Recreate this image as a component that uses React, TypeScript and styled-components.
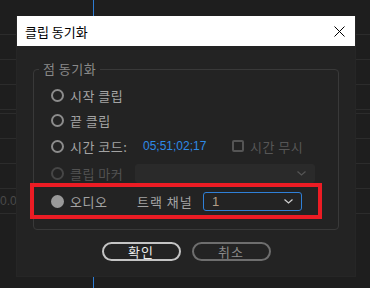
import styled, { createGlobalStyle } from "styled-components";

const GlobalStyle = createGlobalStyle`
    body {
        margin: 0;
        background: #1e1e1e;
    }
    * {
        box-sizing: border-box;
    }
`;

const Page = styled.div`
    position: relative;
    width: 370px;
    height: 288px;
    overflow: hidden;
    background: #1e1e1e;
    font-family: "Noto Sans CJK KR", "Noto Sans", sans-serif;
`;

const Timeline = styled.div`
    display: flex;
    flex-direction: column;
`;

const TrackRow = styled.div<{ $h: number }>`
    height: ${p => p.$h}px;
    border-bottom: 1px solid #2c2c2c;
    display: flex;
    align-items: center;
    font-family: "Liberation Sans", sans-serif;
    font-size: 12px;
    color: #4a4a4a;
`;

const Playhead = styled.div`
    position: absolute;
    left: 93px;
    top: 0;
    bottom: 0;
    width: 1px;
    background: #2d7cd3;
`;

const Dialog = styled.div`
    position: absolute;
    left: 16px;
    top: 16px;
    width: 340px;
    height: 261px;
    background: #232323;
    border: 1px solid #262626;
    border-top: none;
    display: flex;
    flex-direction: column;
`;

const TitleBar = styled.div`
    height: 30px;
    background: #fff;
    display: flex;
    align-items: center;
    justify-content: space-between;
    padding: 0 10px 0 8px;
    font-size: 13px;
    color: #000;
`;

const Body = styled.div`
    padding: 23px 16px 0;
    display: flex;
    flex-direction: column;
`;

const Group = styled.div`
    position: relative;
    border: 1px solid #393939;
    border-radius: 4px;
    padding: 12px 0 14px;
    display: flex;
    flex-direction: column;
`;

const Legend = styled.div`
    position: absolute;
    left: 5px;
    top: -10px;
    padding: 0 4px;
    background: #232323;
    font-size: 13px;
    line-height: 18px;
    color: #8a8a8a;
    letter-spacing: 0.5px;
`;

const Row = styled.div<{ $h: number; $marked?: boolean }>`
    height: ${p => p.$h}px;
    display: flex;
    align-items: center;
    padding-left: 18px;
    font-size: 13px;
    ${p => p.$marked && `
        margin: 1px 20px 0 0;
        outline: 4px solid #ec1c24;
    `}
`;

const Radio = styled.span<{ $checked?: boolean; $disabled?: boolean }>`
    width: 13px;
    height: 13px;
    margin-left: -1px;
    border-radius: 50%;
    flex: none;
    border: 2px solid ${p => (p.$disabled ? "#464646" : "#8c8c8c")};
    background: ${p => (p.$checked ? "#9a9a9a" : "transparent")};
    ${p => p.$checked && "border-color: #9a9a9a;"}
`;

const RadioLabel = styled.span<{ $disabled?: boolean }>`
    width: 65px;
    margin-left: 6px;
    color: ${p => (p.$disabled ? "#525252" : "#a3a3a3")};
    letter-spacing: 0.5px;
    white-space: nowrap;
`;

const TimeCode = styled.span`
    width: 89px;
    margin-left: 8px;
    font-family: "Liberation Sans", sans-serif;
    font-size: 12px;
    color: #2e8ae6;
`;

const CheckBox = styled.span`
    width: 12px;
    height: 12px;
    border: 2px solid #555;
    border-radius: 2px;
`;

const CheckLabel = styled.span`
    margin-left: 6px;
    color: #565656;
    letter-spacing: 0.5px;
`;

const Dropdown = styled.div<{ $active?: boolean }>`
    height: 19px;
    border-radius: 3px;
    display: flex;
    align-items: center;
    justify-content: space-between;
    padding: 0 8px;
    width: ${p => (p.$active ? 99 : 180)}px;
    background: ${p => (p.$active ? "#232323" : "#2a2a2a")};
    border: 1px solid ${p => (p.$active ? "#2f80d8" : "#2a2a2a")};
    color: #b19c86;
    font-family: "Liberation Sans", sans-serif;
    font-size: 13px;
`;

const ChannelLabel = styled.span`
    width: 66px;
    margin-left: 2px;
    color: #a3a3a3;
    letter-spacing: 1px;
    white-space: nowrap;
`;

const Buttons = styled.div`
    margin-top: 12px;
    display: flex;
    justify-content: center;
    gap: 11px;
`;

const Button = styled.button<{ $primary?: boolean }>`
    width: 79px;
    height: 19px;
    border-radius: 10px;
    background: #232323;
    border: 2px solid ${p => (p.$primary ? "#c4c4c4" : "#6e6e6e")};
    color: ${p => (p.$primary ? "#ececec" : "#8c8c8c")};
    font-family: "Noto Sans CJK KR", sans-serif;
    font-size: 13px;
    line-height: 1;
    padding: 0;
    letter-spacing: 1px;
`;

const Chevron = ({ color }: { color: string }) => (
    <svg width="9" height="5" viewBox="0 0 9 5">
        <polyline points="0.5,0.5 4.5,4 8.5,0.5" fill="none" stroke={color} strokeWidth="1.2" />
    </svg>
);

function App() {
    return <Page>
        <GlobalStyle />
        <Timeline>
            <TrackRow $h={35} />
            <TrackRow $h={25} />
            <TrackRow $h={25} />
            <TrackRow $h={25} />
            <TrackRow $h={4} />
            <TrackRow $h={25} />
            <TrackRow $h={25} />
            <TrackRow $h={25} />
            <TrackRow $h={25}>0.0</TrackRow>
        </Timeline>
        <Playhead />
        <Dialog>
            <TitleBar>
                클립 동기화
                <svg width="11" height="11" viewBox="0 0 11 11">
                    <path d="M0.5 0.5 L10.5 10.5 M10.5 0.5 L0.5 10.5" stroke="#000" strokeWidth="1" />
                </svg>
            </TitleBar>
            <Body>
                <Group>
                    <Legend>점 동기화</Legend>
                    <Row $h={26}>
                        <Radio />
                        <RadioLabel>시작 클립</RadioLabel>
                    </Row>
                    <Row $h={24}>
                        <Radio />
                        <RadioLabel>끝 클립</RadioLabel>
                    </Row>
                    <Row $h={28}>
                        <Radio />
                        <RadioLabel>시간 코드:</RadioLabel>
                        <TimeCode>05;51;02;17</TimeCode>
                        <CheckBox />
                        <CheckLabel>시간 무시</CheckLabel>
                    </Row>
                    <Row $h={26}>
                        <Radio $disabled />
                        <RadioLabel $disabled>클립 마커</RadioLabel>
                        <Dropdown>
                            <span />
                            <Chevron color="#555" />
                        </Dropdown>
                    </Row>
                    <Row $h={28} $marked>
                        <Radio $checked />
                        <RadioLabel>오디오</RadioLabel>
                        <ChannelLabel>트랙 채널</ChannelLabel>
                        <Dropdown $active>
                            <span>1</span>
                            <Chevron color="#d0d0d0" />
                        </Dropdown>
                    </Row>
                </Group>
                <Buttons>
                    <Button $primary>확인</Button>
                    <Button>취소</Button>
                </Buttons>
            </Body>
        </Dialog>
    </Page>
}

export default App;
